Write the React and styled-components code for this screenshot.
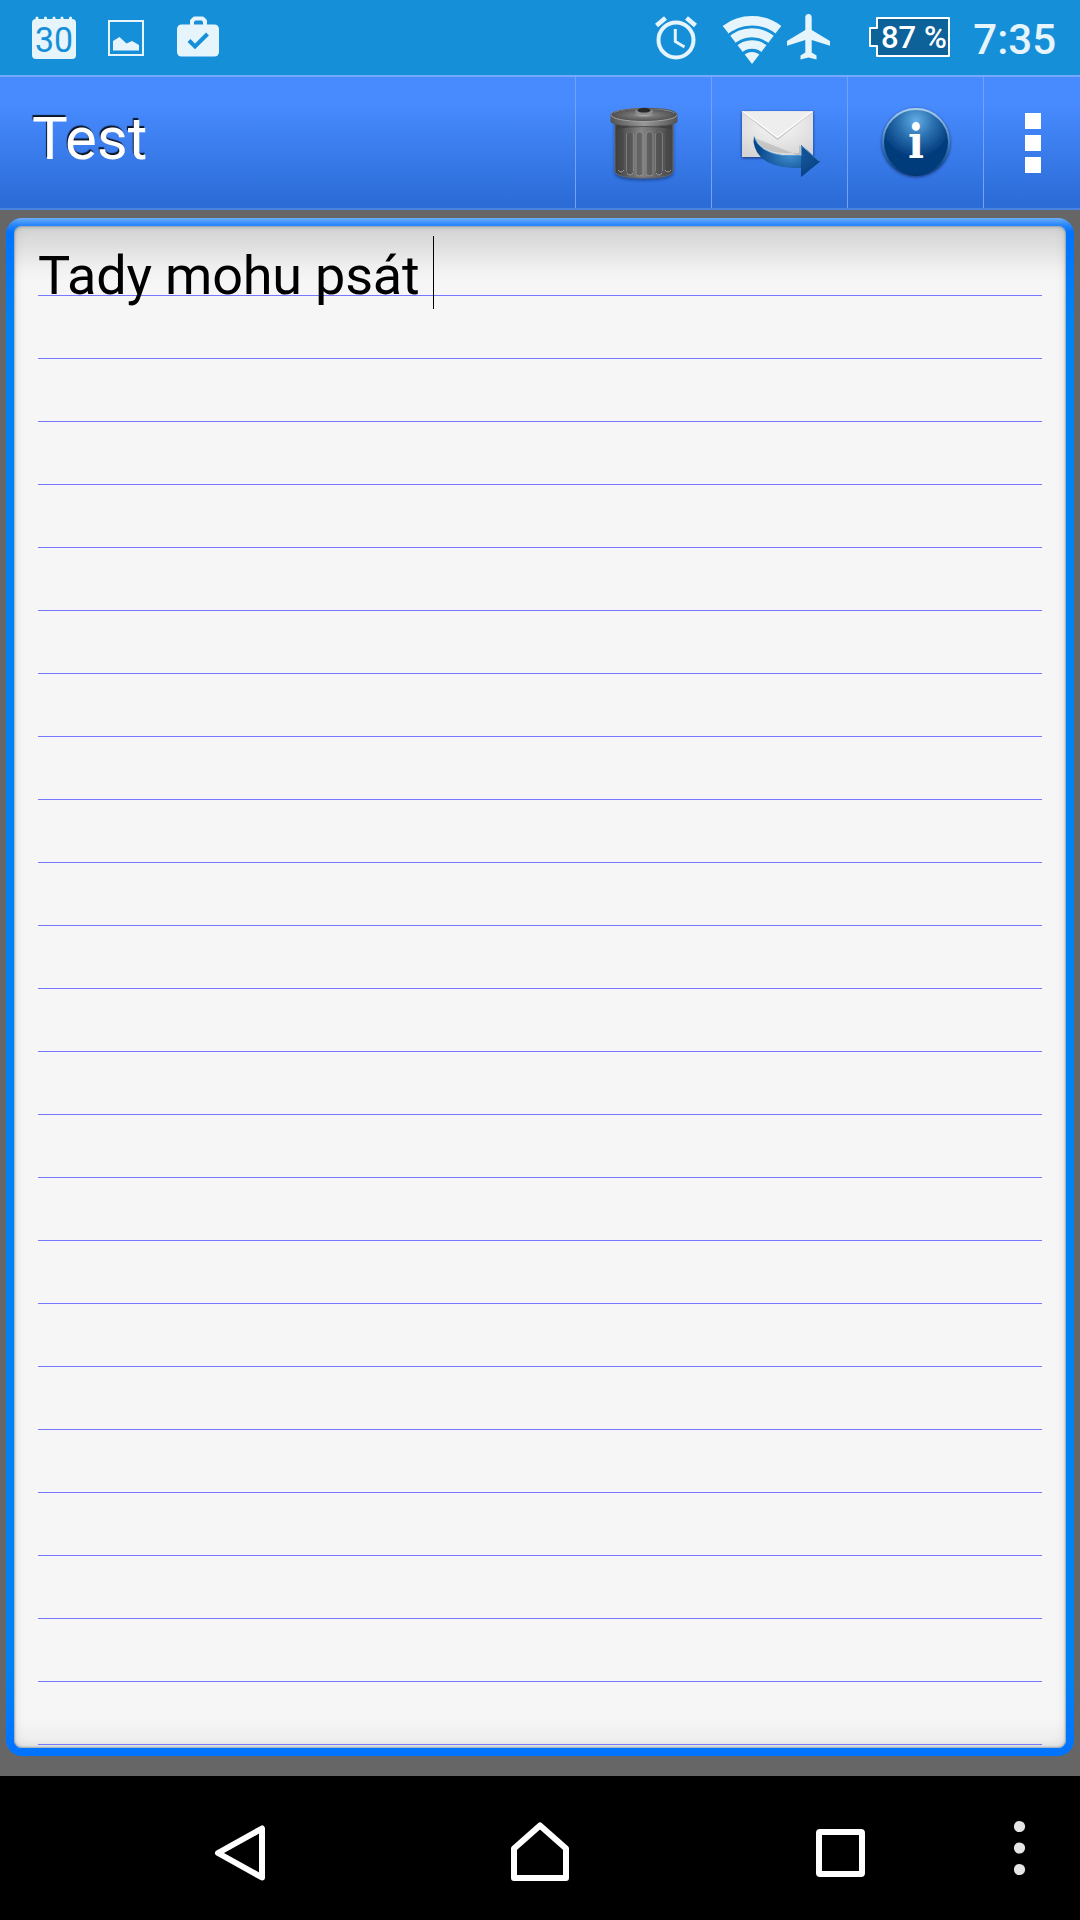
import React from "react";
import styled, { createGlobalStyle } from "styled-components";

const GlobalStyle = createGlobalStyle`
  * {
    box-sizing: border-box;
  }
  body {
    margin: 0;
    background-color: #666;
    font-family: Roboto, "Noto Sans", sans-serif;
  }
  svg {
    display: block;
    flex: none;
  }
`;

const Container = styled.div`
  width: 1080px;
  height: 1920px;
  display: flex;
  flex-direction: column;
  overflow: hidden;
`;

// status bar
const StatusBar = styled.div`
  height: 75px;
  flex: none;
  display: flex;
  justify-content: space-between;
  background-color: #168fd9;
  color: #e6f4fc;
  padding: 14px 24px 0 32px;
`;
const Group = styled.div`
  display: flex;
  align-items: flex-start;
`;
const Slot = styled.div`
  margin-left: ${(props) => props.$left || 0}px;
  margin-top: ${(props) => props.$top || 0}px;
`;
const BatteryText = styled.text`
  font-size: 31px;
  font-weight: 500;
  fill: #fff;
`;
const CalendarText = styled.text`
  font-size: 35px;
  font-weight: 400;
  fill: #168fd9;
`;
const Clock = styled.div`
  font-size: 42px;
  font-weight: 500;
  line-height: 50px;
  margin-left: 23px;
  margin-top: 1px;
`;

// action bar
const ActionBar = styled.div`
  height: 135px;
  flex: none;
  display: flex;
  border-top: 2px solid #75a8ff;
  border-bottom: 2px solid #4a83df;
  background: linear-gradient(#488bff 0%, #488bff 20%, #2b6cd7 96%);
`;
const Title = styled.div`
  flex: 1;
  padding-left: 32px;
  font-size: 60px;
  line-height: 70px;
  padding-top: 27px;
  color: #fff;
  text-shadow: -1px -2px 1px rgba(0, 0, 0, 0.85);
`;
const Action = styled.div`
  width: ${(props) => props.$width || 136}px;
  border-left: 1px solid #72a4f5;
  padding: 26px 0 0 ${(props) => props.$left}px;
`;

// note
const Body = styled.div`
  flex: 1;
  padding: 8px 6px 20px;
  background-color: #666;
`;
const Frame = styled.div`
  height: 1538px;
  padding: 8px;
  border-radius: 16px;
  background: linear-gradient(
    #69adf8 0px,
    #2b86fb 7px,
    #0073ff 14px,
    #0083f2 110px,
    #0083f2 1450px,
    #0074ff 1528px
  );
`;
const Sheet = styled.div`
  height: 1522px;
  padding: 7px 24px 0;
  border-radius: 8px;
  background: linear-gradient(
    #d6d6d6 0px,
    #dcdcdc 16px,
    #f0f0f0 42px,
    #f6f6f6 56px,
    #f6f6f6 1492px,
    #ececec 1522px
  );
  box-shadow: inset 0 0 2px 1px rgba(120, 150, 165, 0.75),
    inset 0 0 12px rgba(0, 0, 0, 0.12);
`;
const Line = styled.div`
  height: 63px;
  border-bottom: 1px solid #7777ff;
  display: flex;
  align-items: flex-start;
`;
const NoteText = styled.span`
  font-size: 54px;
  line-height: 63px;
  letter-spacing: -0.2px;
  margin-top: 11px;
  white-space: pre;
  color: #000;
`;
const Caret = styled.span`
  width: 1px;
  height: 73px;
  margin-top: 3px;
  background-color: #000;
`;

// navigation bar
const NavBar = styled.div`
  height: 144px;
  flex: none;
  display: flex;
  background-color: #000;
  padding-top: 44px;
`;

const CalendarIcon = () => (
  <svg width="44" height="43" viewBox="0 0 44 43">
    <path
      d="M5 4V2M13.5 4V2M22 4V2M30 4V2M38.5 4V2"
      stroke="#e6f4fc"
      strokeWidth="3"
      strokeLinecap="round"
    />
    <rect y="3" width="44" height="40" rx="4" fill="#e6f4fc" />
    <CalendarText
      x="3"
      y="35.5"
      textLength="38"
      lengthAdjust="spacingAndGlyphs"
    >
      30
    </CalendarText>
  </svg>
);

const PictureIcon = () => (
  <svg width="36" height="36" viewBox="0 0 36 36">
    <rect
      x="1"
      y="1"
      width="34"
      height="34"
      fill="none"
      stroke="#e6f4fc"
      strokeWidth="2"
    />
    <path
      d="M5 30.500V21L11.500 17L18.500 23.500L24 21L31 25V30.500Z"
      fill="#e6f4fc"
    />
  </svg>
);

const BriefcaseIcon = () => (
  <svg width="42" height="41" viewBox="0 0 42 41">
    <path
      d="M15 10V5L17.500 2.500H25.500L28 5V10"
      fill="none"
      stroke="#e6f4fc"
      strokeWidth="4"
      strokeLinejoin="round"
    />
    <rect y="8.500" width="42" height="32" rx="4.500" fill="#e6f4fc" />
    <path
      d="M12 24.500L18 30.500L30.500 18"
      fill="none"
      stroke="#168fd9"
      strokeWidth="4"
    />
  </svg>
);

const AlarmIcon = () => (
  <svg width="43" height="44" viewBox="0 0 43 44">
    <g fill="none" stroke="#e6f4fc">
      <circle cx="21" cy="24" r="17.500" strokeWidth="4" />
      <path d="M20.300 13V25.500L29.500 31" strokeWidth="3" />
      <path d="M1.500 9.500L10.500 2M31.500 2L40.500 9.500" strokeWidth="4.600" />
    </g>
  </svg>
);

const WifiIcon = () => (
  <svg width="58" height="48" viewBox="0 0 58 48">
    <defs>
      <clipPath id="fan">
        <path d="M29 48L-1 9V-2H59V9Z" />
      </clipPath>
    </defs>
    <g clipPath="url(#fan)" fill="none" stroke="#e6f4fc">
      <circle cx="29" cy="48" r="43.200" strokeWidth="9.500" />
      <circle cx="29" cy="48" r="31.200" strokeWidth="9" />
      <circle cx="29" cy="48" r="19.500" strokeWidth="8.500" />
      <circle cx="29" cy="48" r="6" strokeWidth="12" />
    </g>
  </svg>
);

const PlaneIcon = () => (
  <svg width="43" height="46" viewBox="0 0 43 46">
    <path
      d="M18.300 3.500Q18.300 0 21.500 0T24.700 3.500V16L43 27V31.800L24.700 26V38.500L29.500 41.500V45.500L21.500 43.500L13.500 45.500V41.500L18.300 38.500V26L0 31.800V27L18.300 16Z"
      fill="#e6f4fc"
    />
  </svg>
);

const BatteryIcon = () => (
  <svg width="81" height="40" viewBox="0 0 81 40">
    <path
      d="M8 1H80V39H8V29H1V11H8Z"
      fill="#0d6299"
      stroke="#fff"
      strokeWidth="2"
      strokeLinejoin="round"
    />
    <BatteryText x="12" y="31">
      87 %
    </BatteryText>
  </svg>
);

const TrashIcon = () => (
  <svg width="72" height="80" viewBox="0 0 72 80">
    <defs>
      <linearGradient id="can">
        <stop offset="0" stopColor="#3b3b3b" />
        <stop offset="0.450" stopColor="#858585" />
        <stop offset="0.600" stopColor="#747474" />
        <stop offset="1" stopColor="#424242" />
      </linearGradient>
      <linearGradient id="rim">
        <stop offset="0" stopColor="#555" />
        <stop offset="0.500" stopColor="#999" />
        <stop offset="1" stopColor="#555" />
      </linearGradient>
      <radialGradient id="lid">
        <stop offset="0" stopColor="#bbb" />
        <stop offset="0.350" stopColor="#777" />
        <stop offset="1" stopColor="#4e4e4e" />
      </radialGradient>
      <filter id="soft" x="-20%" y="-20%" width="140%" height="140%">
        <feDropShadow
          dx="0"
          dy="2"
          stdDeviation="1.500"
          floodColor="#102a60"
          floodOpacity="0.600"
        />
      </filter>
    </defs>
    <path
      d="M7 15H65V68Q64 75 36 75T7 68Z"
      fill="url(#can)"
      stroke="#666"
      filter="url(#soft)"
    />
    <path d="M8 18H64V26Q52 24 36 24T8 26Z" fill="#3c3c3c" opacity="0.800" />
    <g stroke="#444" strokeWidth="5.500" strokeLinecap="round" opacity="0.450">
      <path d="M13 28V66M22 30V69M31.500 32V71M41.500 32V71M50.500 30V69M60 28V66" />
    </g>
    <g fill="none" stroke="#999" strokeWidth="1">
      <path d="M10 67Q13 71 16 67M19 70Q22 74 25 70M28 71Q31.500 75 35 71M38 71Q41.500 75 45 71M48 70Q51 74 54 70M57 67Q60 71 63 67" />
      <path
        d="M18.500 68V31Q22 26 25.500 31V68M28 70V31Q31.500 26 35 31V70M38 70V31Q41.500 26 45 31V70M47.500 68V31Q51 26 54.500 31V68"
        opacity="0.500"
      />
    </g>
    <path
      d="M3 11V19Q8 23.500 36 23.500T69 19V11Z"
      fill="url(#rim)"
      stroke="#555"
      strokeWidth="1"
    />
    <ellipse
      cx="36"
      cy="12"
      rx="33"
      ry="6.500"
      fill="url(#lid)"
      stroke="#a4a4a4"
      strokeWidth="1"
    />
    <path
      d="M3 12Q5 6 36 5.500T69 12"
      fill="none"
      stroke="#5b5b5b"
      strokeWidth="1.200"
    />
    <ellipse cx="36" cy="8.500" rx="9" ry="3.500" fill="#8c8c8c" />
    <ellipse cx="36" cy="7.200" rx="6.500" ry="2.400" fill="#292929" />
  </svg>
);

const MailIcon = () => (
  <svg width="84" height="76" viewBox="0 0 84 76">
    <defs>
      <radialGradient id="paper" cx="0.500" cy="0.300" r="0.750">
        <stop offset="0" stopColor="#f8f8f8" />
        <stop offset="1" stopColor="#d4d4d4" />
      </radialGradient>
      <radialGradient id="arrow" cx="0.550" cy="0.500" r="0.500">
        <stop offset="0" stopColor="#3e8aca" />
        <stop offset="1" stopColor="#08478b" />
      </radialGradient>
      <filter id="mailShadow" x="-10%" y="-10%" width="120%" height="125%">
        <feDropShadow
          dx="0"
          dy="1"
          stdDeviation="1.500"
          floodColor="#0b2454"
          floodOpacity="0.800"
        />
      </filter>
    </defs>
    <rect
      x="3"
      y="8"
      width="71"
      height="46"
      fill="url(#paper)"
      filter="url(#mailShadow)"
    />
    <path d="M4 9H73L38.500 35Z" fill="#eee" />
    <path
      d="M4 9L38.500 36L73 9"
      fill="none"
      stroke="#c5c5c5"
      strokeWidth="1.500"
    />
    <path
      d="M4 8.500L38.500 34.500L73 8.500"
      fill="none"
      stroke="#fff"
      strokeWidth="1.200"
    />
    <path d="M16 35Q23 50 46 50H60V42L73 52H58Z" fill="#000" opacity="0.120" />
    <path
      d="M15 33Q20 49 43 52H62V42L81 58.500L62 74V65H54Q18 63 14.500 39Z"
      fill="url(#arrow)"
    />
    <path d="M62 42L81 58.500L62 74Z" fill="#064184" opacity="0.600" />
    <path
      d="M15 34Q20 49 43 52.500H62.500V43L80 58"
      fill="none"
      stroke="#5aa4df"
      strokeWidth="1"
      opacity="0.700"
    />
  </svg>
);

const InfoLetter = styled.text`
  font-family: "DejaVu Serif", serif;
  font-weight: bold;
  font-size: 46px;
  fill: #fff;
`;

const InfoIcon = () => (
  <svg width="76" height="78" viewBox="0 0 76 78">
    <defs>
      <radialGradient id="ball" cx="0.500" cy="0.180" r="0.560">
        <stop offset="0" stopColor="#62aee8" />
        <stop offset="0.450" stopColor="#2d73b2" />
        <stop offset="1" stopColor="#003a7c" />
      </radialGradient>
      <linearGradient id="ring" x1="0" y1="0" x2="0" y2="1">
        <stop offset="0" stopColor="#a9cfeb" />
        <stop offset="0.550" stopColor="#3c77b4" />
        <stop offset="1" stopColor="#003775" />
      </linearGradient>
      <filter id="ballShadow" x="-15%" y="-15%" width="130%" height="130%">
        <feDropShadow
          dx="0"
          dy="1"
          stdDeviation="1.500"
          floodColor="#0b2454"
          floodOpacity="0.800"
        />
      </filter>
    </defs>
    <circle
      cx="38"
      cy="39"
      r="33"
      fill="url(#ball)"
      stroke="url(#ring)"
      strokeWidth="2"
      filter="url(#ballShadow)"
    />
    <InfoLetter
      x="30"
      y="54.500"
      textLength="16"
      lengthAdjust="spacingAndGlyphs"
    >
      i
    </InfoLetter>
  </svg>
);

const OverflowIcon = () => (
  <svg width="18" height="64" viewBox="0 0 18 64">
    <g fill="#fff">
      <rect x="1" y="1" width="16" height="16" />
      <rect x="1" y="23" width="16" height="16" />
      <rect x="1" y="45" width="16" height="16" />
    </g>
  </svg>
);

const lines = Array.from({ length: 23 }, (_, i) => i);

const App = () => {
  return (
    <>
      <GlobalStyle />
      <Container>
        <StatusBar>
          {/* notifications */}
          <Group>
            <Slot $top={2}>
              <CalendarIcon />
            </Slot>
            <Slot $left={32} $top={6}>
              <PictureIcon />
            </Slot>
            <Slot $left={33} $top={2}>
              <BriefcaseIcon />
            </Slot>
          </Group>
          {/* system */}
          <Group>
            <Slot $top={2}>
              <AlarmIcon />
            </Slot>
            <Slot $left={25} $top={2}>
              <WifiIcon />
            </Slot>
            <Slot $left={6}>
              <PlaneIcon />
            </Slot>
            <Slot $left={39} $top={3}>
              <BatteryIcon />
            </Slot>
            <Clock>7:35</Clock>
          </Group>
        </StatusBar>

        <ActionBar>
          <Title>Test</Title>
          <Action $left={32}>
            <TrashIcon />
          </Action>
          <Action $left={27}>
            <MailIcon />
          </Action>
          <Action $left={30}>
            <InfoIcon />
          </Action>
          <Action $width={97} $left={40}>
            <Slot $top={9}>
              <OverflowIcon />
            </Slot>
          </Action>
        </ActionBar>

        <Body>
          <Frame>
            <Sheet>
              <Line>
                <NoteText>{"Tady mohu psát "}</NoteText>
                <Caret />
              </Line>
              {lines.map((line) => (
                <Line key={line} />
              ))}
            </Sheet>
          </Frame>
        </Body>

        <NavBar>
          <Slot $left={211}>
            <svg width="56" height="64" viewBox="0 0 56 64">
              <path
                d="M51 8.500V57.500L7 33Z"
                fill="none"
                stroke="#fff"
                strokeWidth="6"
                strokeLinejoin="round"
              />
            </svg>
          </Slot>
          <Slot $left={241}>
            <svg width="64" height="64" viewBox="0 0 64 64">
              <path
                d="M32 5.500L58 28.500V58H6V28.500Z"
                fill="none"
                stroke="#fff"
                strokeWidth="6"
                strokeLinejoin="round"
              />
            </svg>
          </Slot>
          <Slot $left={242}>
            <svg width="53" height="64" viewBox="0 0 53 64">
              <rect
                x="5"
                y="12"
                width="43"
                height="42"
                rx="1"
                fill="none"
                stroke="#fff"
                strokeWidth="6"
              />
            </svg>
          </Slot>
          <Slot $left={146}>
            <svg width="13" height="64" viewBox="0 0 13 64">
              <g fill="#e6e6e6">
                <circle cx="6.500" cy="6.500" r="5.600" />
                <circle cx="6.500" cy="28" r="5.600" />
                <circle cx="6.500" cy="49.500" r="5.600" />
              </g>
            </svg>
          </Slot>
        </NavBar>
      </Container>
    </>
  );
};

export default App;
